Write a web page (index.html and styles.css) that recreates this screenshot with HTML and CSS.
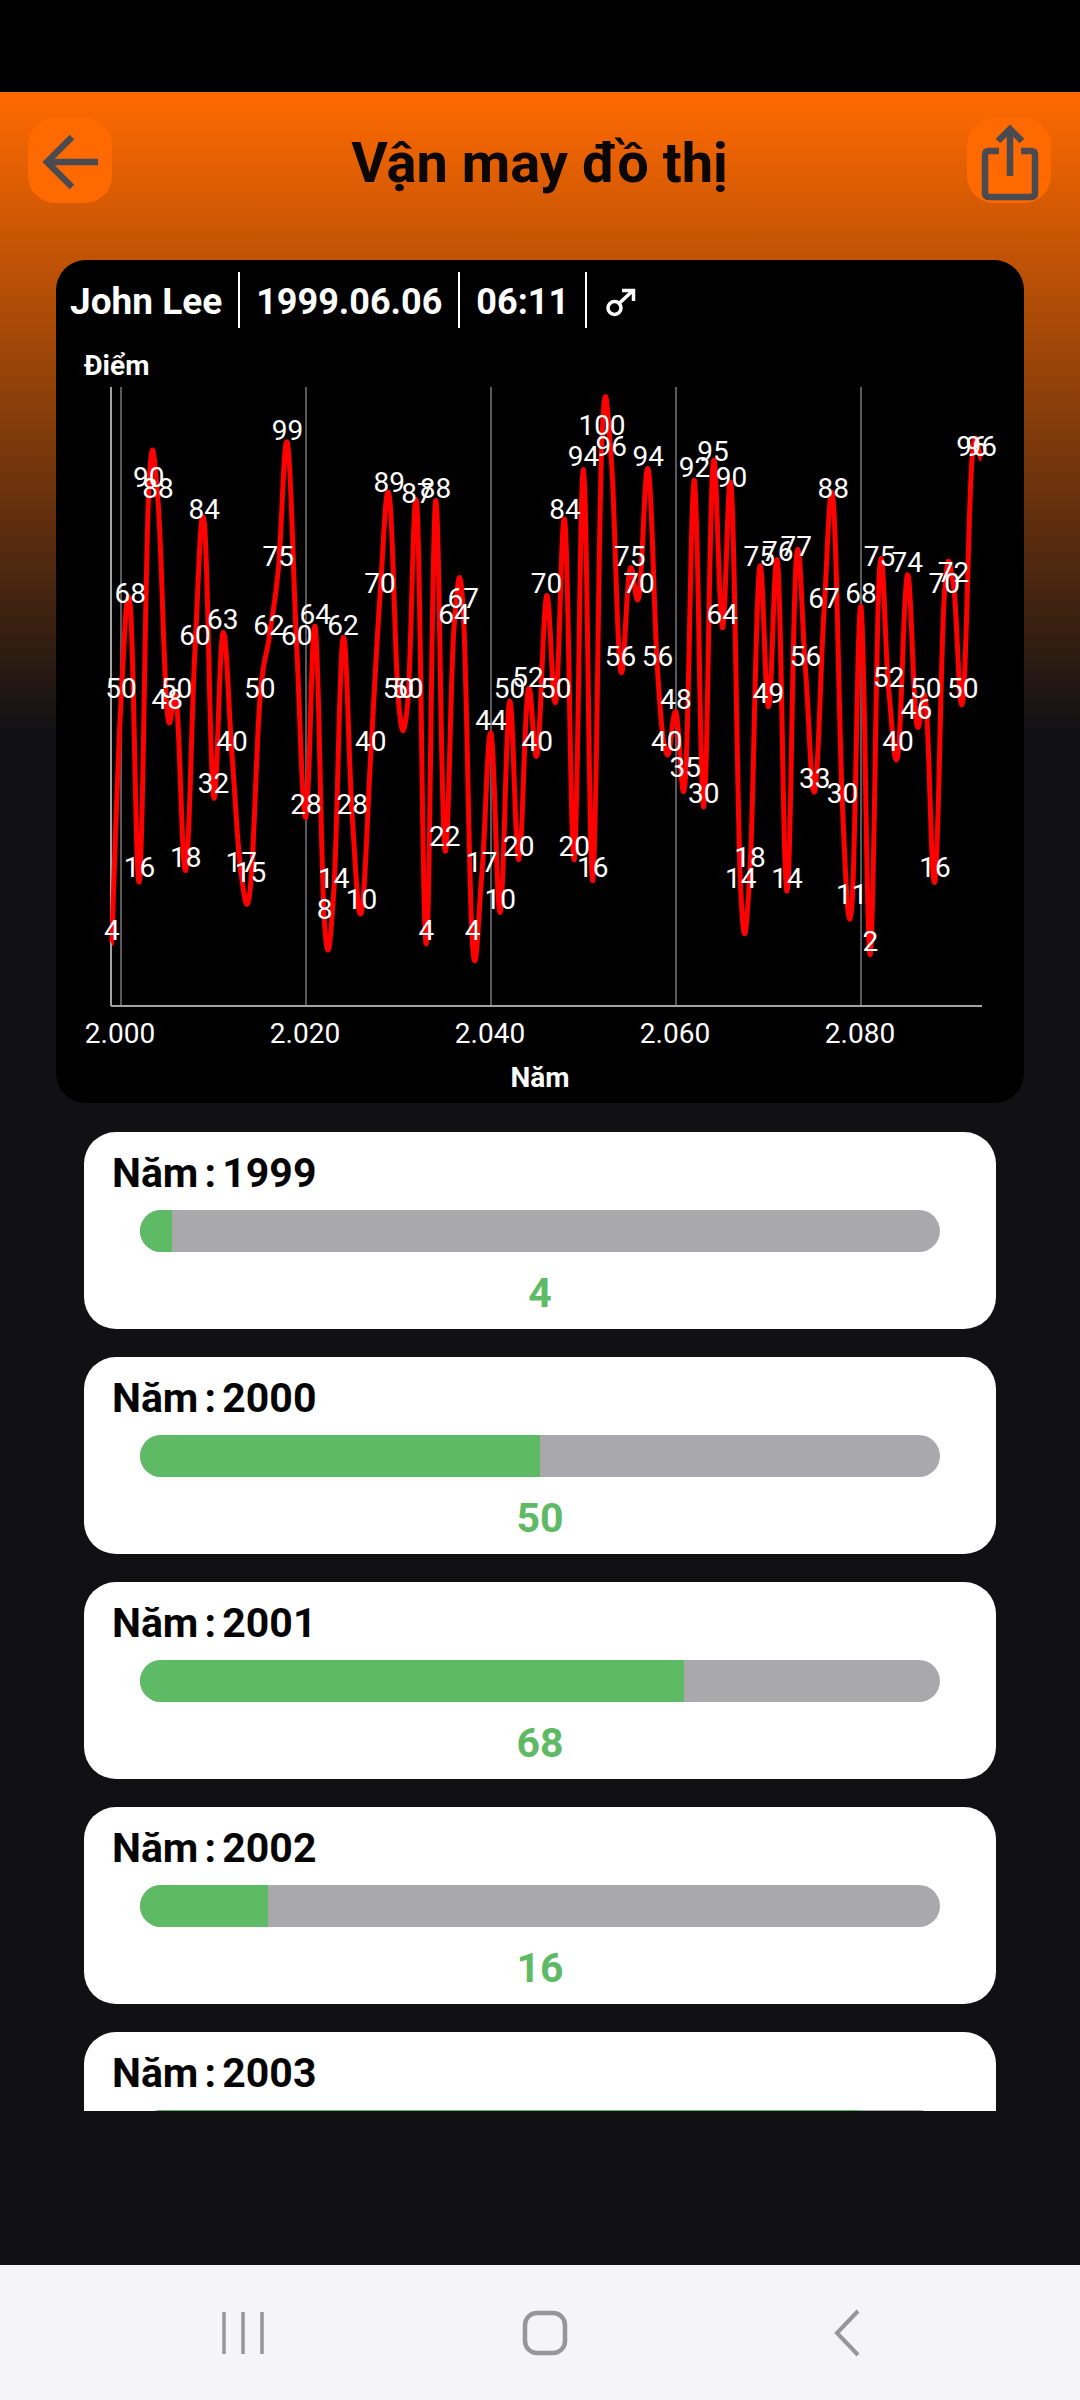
FILE: index.html
```html
<!DOCTYPE html>
<html lang="vi">
<head>
    <meta charset="UTF-8">
    <meta name="viewport" content="width=device-width, initial-scale=1.0">
    <title>Vận may đồ thị</title>
    <link rel="stylesheet" href="styles.css">
</head>
<body>
    <div class="status-bar"></div>

    <div class="main">
        <div class="header">
            <button class="icon-btn">
                <svg width="84" height="85" viewBox="0 0 84 85" fill="none" stroke="#4a4a50" stroke-width="6.500">
                    <path d="M44 19 L19 44 L44 69"/>
                    <path d="M19 44 H70"/>
                </svg>
            </button>
            <h1 class="title">Vận may đồ thị</h1>
            <button class="icon-btn">
                <svg width="84" height="85" viewBox="0 0 84 85" fill="none" stroke="#4a4a50" stroke-width="6.500">
                    <path d="M32 33 H22 Q18 33 18 37 V75 Q18 79 22 79 H64 Q68 79 68 75 V37 Q68 33 64 33 H54"/>
                    <path d="M43 12 V58"/>
                    <path d="M31 23 L43 11 L55 23"/>
                </svg>
            </button>
        </div>

        <div class="chart-card">
            <div class="info-row">
                <span class="info-item info-name">John Lee</span>
                <span class="info-item">1999.06.06</span>
                <span class="info-item">06:11</span>
                <svg class="gender" width="32" height="30" viewBox="0 0 32 30" fill="none" stroke="#fff" stroke-width="3.500">
                    <circle cx="9.500" cy="20" r="6.500"/>
                    <path d="M14 15.500 L28 2.500"/>
                    <path d="M17 2.500 H28.500 V13"/>
                </svg>
            </div>
            <div class="axis-title y-title">Điểm</div>
            <svg id="chart" class="chart" width="968" height="676" viewBox="0 0 968 676"></svg>
            <div class="axis-title x-title">Năm</div>
        </div>

        <div class="year-list">
            <div class="year-card">
                <div class="year-name">Năm : 1999</div>
                <div class="bar"><div class="bar-fill" style="width: 4%"></div></div>
                <div class="year-value">4</div>
            </div>
            <div class="year-card">
                <div class="year-name">Năm : 2000</div>
                <div class="bar"><div class="bar-fill" style="width: 50%"></div></div>
                <div class="year-value">50</div>
            </div>
            <div class="year-card">
                <div class="year-name">Năm : 2001</div>
                <div class="bar"><div class="bar-fill" style="width: 68%"></div></div>
                <div class="year-value">68</div>
            </div>
            <div class="year-card">
                <div class="year-name">Năm : 2002</div>
                <div class="bar"><div class="bar-fill" style="width: 16%"></div></div>
                <div class="year-value">16</div>
            </div>
            <div class="year-card">
                <div class="year-name">Năm : 2003</div>
                <div class="bar"><div class="bar-fill" style="width: 90%"></div></div>
                <div class="year-value">90</div>
            </div>
        </div>
    </div>

    <div class="nav-bar">
        <svg width="44" height="46" viewBox="0 0 44 46" fill="none" stroke="#97979a" stroke-width="3.500">
            <path d="M3 2 V44 M22 2 V44 M41 2 V44"/>
        </svg>
        <svg width="46" height="46" viewBox="0 0 46 46" fill="none" stroke="#97979a" stroke-width="4.500">
            <rect x="3" y="3" width="40" height="40" rx="12"/>
        </svg>
        <svg width="30" height="48" viewBox="0 0 30 48" fill="none" stroke="#97979a" stroke-width="4">
            <path d="M26 2 L5 24 L26 46"/>
        </svg>
    </div>

    <script src="chart.js"></script>
</body>
</html>
```

FILE: styles.css
```css
body, html {
    margin: 0;
    padding: 0;
    width: 1080px;
    height: 2400px;
    overflow: hidden;
    font-family: Roboto, "Noto Sans", sans-serif;
    background-color: #111114;
}
body {
    display: flex;
    flex-direction: column;
}
.status-bar {
    height: 92px;
    background-color: #000;
}
.main {
    height: 2173px;
    overflow: hidden;
    background: linear-gradient(#ff6a00 0, #111114 640px);
}
.header {
    display: flex;
    align-items: center;
    justify-content: space-between;
    padding: 26px 29px 0 28px;
}
.icon-btn {
    width: 84px;
    height: 85px;
    padding: 0;
    border: none;
    border-radius: 27px;
    background-color: #ff6a00;
}
.icon-btn svg {
    display: block;
}
.title {
    margin: 5px 0 0;
    font-size: 56px;
    font-weight: 700;
    color: #0b0704;
}
.chart-card {
    margin: 57px 56px 0;
    height: 843px;
    box-sizing: border-box;
    padding-top: 12px;
    border-radius: 30px;
    background-color: #000;
    color: #fff;
}
.info-row {
    display: flex;
    height: 56px;
    padding-left: 14px;
}
.info-item {
    display: flex;
    align-items: center;
    padding: 3px 16px 0 0;
    margin-right: 16px;
    border-right: 2.500px solid #fff;
    font-size: 36px;
    font-weight: 700;
}
.info-name {
    font-size: 37px;
}
.gender {
    align-self: center;
    margin: 6px 0 0 2px;
}
.axis-title {
    font-size: 28px;
    font-weight: 700;
    line-height: 32px;
}
.y-title {
    margin: 22px 0 0 28px;
    height: 34px;
}
.chart {
    display: block;
    overflow: visible;
}
.chart .grid {
    stroke: #77777a;
    stroke-width: 1.500;
}
.chart .axis {
    stroke: #a3a3a5;
    stroke-width: 2;
}
.chart .curve {
    fill: none;
    stroke: #ff0000;
    stroke-width: 5;
    stroke-linejoin: round;
}
.chart text {
    fill: #fff;
    font-size: 28px;
    text-anchor: middle;
}
.x-title {
    margin-top: 2px;
    text-align: center;
}
.year-list {
    display: flex;
    flex-direction: column;
    gap: 28px;
    height: 979px;
    margin: 29px 84px 0;
    overflow: hidden;
}
.year-card {
    flex: none;
    height: 197px;
    box-sizing: border-box;
    padding: 18px 56px 0;
    border-radius: 32px;
    background-color: #fff;
}
.year-name {
    margin-left: -28px;
    font-size: 41px;
    font-weight: 700;
    line-height: 46px;
    word-spacing: -4px;
    color: #050505;
}
.bar {
    height: 42px;
    margin-top: 14px;
    border-radius: 21px;
    overflow: hidden;
    background-color: #a9a8aa;
}
.bar-fill {
    height: 100%;
    background-color: #5fba66;
}
.year-value {
    margin-top: 18px;
    font-size: 41px;
    font-weight: 700;
    line-height: 46px;
    text-align: center;
    color: #5fba66;
}
.nav-bar {
    display: grid;
    grid-template-columns: repeat(3, 1fr);
    justify-items: center;
    align-items: center;
    height: 135px;
    padding: 0 82px 0 92px;
    background-color: #f5f4f7;
}
.nav-bar svg {
    display: block;
}
```

FILE: chart.js
```js
// Diem theo tung nam, 1999 -> 2093
const values = [
    4, 50, 68, 16, 90, 88, 48, 50, 18, 60, 84, 32, 63, 40, 17, 15, 50, 62, 75, 99,
    60, 28, 64, 8, 14, 62, 28, 10, 40, 70, 89, 50, 50, 87, 4, 88, 22, 64, 67, 4,
    17, 44, 10, 50, 20, 52, 40, 70, 50, 84, 20, 94, 16, 100, 96, 56, 75, 70, 94, 56,
    40, 48, 35, 92, 30, 95, 64, 90, 14, 18, 75, 49, 76, 14, 77, 56, 33, 67, 88, 30,
    11, 68, 2, 75, 52, 40, 74, 46, 50, 16, 70, 72, 50, 96, 96
];
const SVG_NS = 'http://www.w3.org/2000/svg';
const chart = document.getElementById('chart');

// toa do trong svg (svg bat dau tai x=56, y=384 cua man hinh)
const yearX = year => 65 + 9.25 * (year - 2000);
const valueY = value => 54 + (100 - value) * 5.27;
const points = values.map((value, i) => ({ x: yearX(1999 + i), y: valueY(value) }));

function add(tag, attrs, text) {
    const el = document.createElementNS(SVG_NS, tag);
    Object.keys(attrs).forEach(key => el.setAttribute(key, attrs[key]));
    if (text !== undefined) el.textContent = text;
    chart.appendChild(el);
}

// duong cong: control point = (next - prev) / 2 * smooth
function curvePath(pts) {
    const smooth = 0.39;
    let d = `M${pts[0].x} ${pts[0].y}`;
    let temp = { x: 0, y: 0 };
    for (let i = 1; i < pts.length; i++) {
        const cur = pts[i];
        const prev = pts[i - 1];
        const next = pts[Math.min(i + 1, pts.length - 1)];
        const c1x = prev.x + temp.x;
        const c1y = prev.y + temp.y;
        temp = { x: (next.x - prev.x) / 2 * smooth, y: (next.y - prev.y) / 2 * smooth };
        d += ` C${c1x.toFixed(1)} ${c1y.toFixed(1)} ${(cur.x - temp.x).toFixed(1)} ${(cur.y - temp.y).toFixed(1)} ${cur.x.toFixed(1)} ${cur.y.toFixed(1)}`;
    }
    return d;
}

[2000, 2020, 2040, 2060, 2080].forEach(year => {
    const x = yearX(year);
    add('line', { class: 'grid', x1: x, y1: 3, x2: x, y2: 622 });
    add('text', { x: x - 1, y: 659 }, '2.' + String(year).slice(1));
});
add('line', { class: 'axis', x1: 55, y1: 3, x2: 55, y2: 622 });
add('line', { class: 'axis', x1: 55, y1: 622, x2: 926, y2: 622 });

add('path', { class: 'curve', d: curvePath(points) });

values.forEach((value, i) => {
    add('text', { x: points[i].x, y: points[i].y - 3.500 }, value);
});
```
